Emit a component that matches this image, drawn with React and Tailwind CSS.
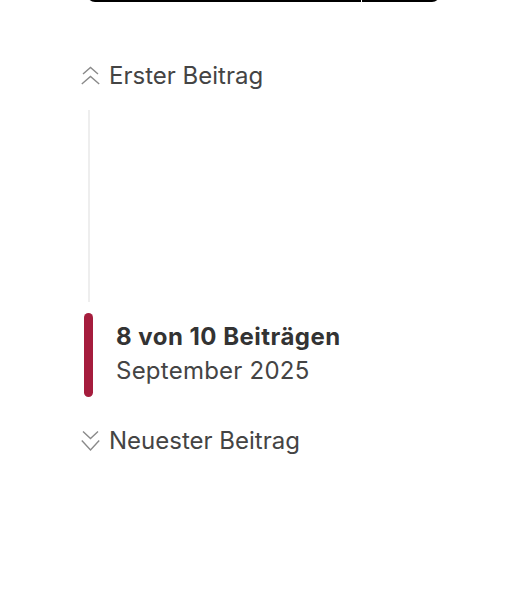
import React from "react";

function ChevronsUp() {
  return (
    <svg width="20" height="20" viewBox="0 0 20 20" fill="none" className="shrink-0">
      <path d="M2 8 L9.5 1.5 L17 8" stroke="#8a8a8a" strokeWidth="1.4" />
      <path d="M0.8 18 L9.5 10.5 L18.2 18" stroke="#8a8a8a" strokeWidth="1.4" />
    </svg>
  );
}

function ChevronsDown() {
  return (
    <svg width="20" height="22" viewBox="0 0 20 22" fill="none" className="shrink-0">
      <path d="M2 1.5 L9.5 8.5 L17 1.5" stroke="#8a8a8a" strokeWidth="1.4" />
      <path d="M0.8 10.5 L9.5 20 L18.2 10.5" stroke="#8a8a8a" strokeWidth="1.4" />
    </svg>
  );
}

export default function App() {
  return (
    <div
      className="w-[517px] h-[600px] bg-white overflow-hidden"
      style={{ fontFamily: 'Inter, "Liberation Sans", Arial, sans-serif' }}
    >
      {/* clipped bottom of a button above */}
      <div className="ml-[87px] w-[353px] h-[30px] -mt-[28px] flex rounded-lg overflow-hidden bg-black">
        <div className="flex-1" />
        <div className="w-px bg-white" />
        <div className="w-[78px]" />
      </div>

      <div className="pl-[81px] pt-[62px]">
        <button className="flex items-center gap-2 text-[24px] text-[#444] leading-none">
          <ChevronsUp />
          <span>Erster Beitrag</span>
        </button>

        <div className="ml-[7px] mt-[22px] w-[2px] h-[192px] bg-[#eeeeee]" />

        <div className="flex gap-[23px] mt-[11px]">
          <div className="ml-[3px] w-[9px] h-[84px] rounded-full bg-[#a51d3d]" />
          <div className="pt-[8px]">
            <div className="text-[24px] tracking-[0.02em] font-bold text-[#333] leading-[32px]">8 von 10 Beiträgen</div>
            <div className="text-[24px] tracking-[0.01em] text-[#444] leading-[36px]">September 2025</div>
          </div>
        </div>

        <button className="flex items-center gap-2 mt-[32px] text-[24px] text-[#444] leading-none">
          <ChevronsDown />
          <span>Neuester Beitrag</span>
        </button>
      </div>
    </div>
  );
}
